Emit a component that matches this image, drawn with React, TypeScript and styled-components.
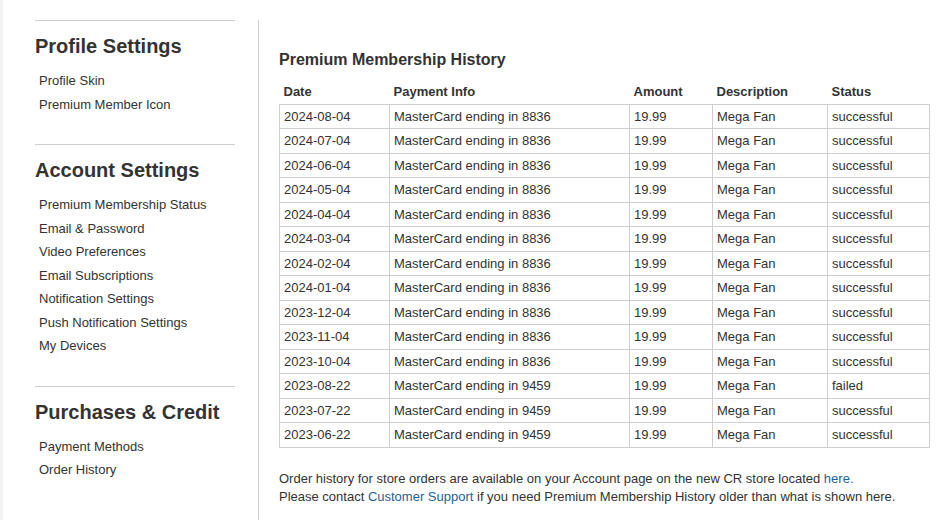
import styled, { createGlobalStyle } from "styled-components";

const GlobalStyle = createGlobalStyle`
  html, body {
    margin: 0;
    padding: 0;
    background: #f2f2f2;
  }
  body {
    font-family: "Liberation Sans", Arial, sans-serif;
    color: #333;
  }
`;

const Page = styled.div`
  display: flex;
  margin-left: 3px;
  min-height: 520px;
  background: #fff;
  padding-top: 20px;
  box-sizing: border-box;
`;

const Sidebar = styled.aside`
  width: 256px;
  flex-shrink: 0;
  box-sizing: border-box;
  padding-left: 32px;
  padding-right: 23px;
  border-right: 1px solid #d0d0d0;
`;

const Section = styled.section`
  border-top: 1px solid #cfcfcf;
  padding-bottom: 28px;
`;

const SectionTitle = styled.h2`
  margin: 13px 0 0;
  font-size: 20px;
  line-height: 24px;
  font-weight: 700;
  color: #333;
`;

const NavList = styled.ul`
  list-style: none;
  margin: 0;
  padding: 11px 0 0 4px;
`;

const NavItem = styled.li`
  font-size: 13px;
  line-height: 23.5px;
  color: #333;
  cursor: pointer;
`;

const Main = styled.main`
  flex: 1;
  padding: 0 16px 0 20px;
`;

const Title = styled.h1`
  margin: 30px 0 10px;
  font-size: 16px;
  line-height: 20px;
  font-weight: 700;
  color: #333;
`;

const Table = styled.table`
  width: 650px;
  table-layout: fixed;
  border-collapse: collapse;
  font-size: 13px;
  color: #333;
`;

const Th = styled.th<{ $w: number }>`
  box-sizing: border-box;
  width: ${(p) => p.$w}px;
  text-align: left;
  font-weight: 700;
  padding: 3px 4px 3px 4px;
  line-height: 17.5px;
`;

const Td = styled.td`
  border: 1px solid #cfcfcf;
  padding: 3px 4px 3px 4px;
  line-height: 17.5px;
  white-space: nowrap;
`;

const Note = styled.p`
  margin: 22px 0 0;
  font-size: 13px;
  line-height: 18px;
  color: #333;
`;

const Link = styled.a`
  color: #1f5f99;
  text-decoration: none;
`;

type Payment = {
  date: string;
  card: string;
  status: string;
};

const sections = [
  { title: "Profile Settings", items: ["Profile Skin", "Premium Member Icon"] },
  {
    title: "Account Settings",
    items: [
      "Premium Membership Status",
      "Email & Password",
      "Video Preferences",
      "Email Subscriptions",
      "Notification Settings",
      "Push Notification Settings",
      "My Devices",
    ],
  },
  { title: "Purchases & Credit", items: ["Payment Methods", "Order History"] },
];

const payments: Payment[] = [
  { date: "2024-08-04", card: "8836", status: "successful" },
  { date: "2024-07-04", card: "8836", status: "successful" },
  { date: "2024-06-04", card: "8836", status: "successful" },
  { date: "2024-05-04", card: "8836", status: "successful" },
  { date: "2024-04-04", card: "8836", status: "successful" },
  { date: "2024-03-04", card: "8836", status: "successful" },
  { date: "2024-02-04", card: "8836", status: "successful" },
  { date: "2024-01-04", card: "8836", status: "successful" },
  { date: "2023-12-04", card: "8836", status: "successful" },
  { date: "2023-11-04", card: "8836", status: "successful" },
  { date: "2023-10-04", card: "8836", status: "successful" },
  { date: "2023-08-22", card: "9459", status: "failed" },
  { date: "2023-07-22", card: "9459", status: "successful" },
  { date: "2023-06-22", card: "9459", status: "successful" },
];

export default function App() {
  return (
    <>
      <GlobalStyle />
      <Page>
        <Sidebar>
          {sections.map((s) => (
            <Section key={s.title}>
              <SectionTitle>{s.title}</SectionTitle>
              <NavList>
                {s.items.map((item) => (
                  <NavItem key={item}>{item}</NavItem>
                ))}
              </NavList>
            </Section>
          ))}
        </Sidebar>
        <Main>
          <Title>Premium Membership History</Title>
          <Table>
            <thead>
              <tr>
                <Th $w={110}>Date</Th>
                <Th $w={240}>Payment Info</Th>
                <Th $w={83}>Amount</Th>
                <Th $w={115}>Description</Th>
                <Th $w={102}>Status</Th>
              </tr>
            </thead>
            <tbody>
              {payments.map((p) => (
                <tr key={p.date}>
                  <Td>{p.date}</Td>
                  <Td>MasterCard ending in {p.card}</Td>
                  <Td>19.99</Td>
                  <Td>Mega Fan</Td>
                  <Td>{p.status}</Td>
                </tr>
              ))}
            </tbody>
          </Table>
          <Note>
            Order history for store orders are available on your Account page on
            the new CR store located <Link href="#">here.</Link>
            <br />
            Please contact <Link href="#">Customer Support</Link> if you need
            Premium Membership History older than what is shown here.
          </Note>
        </Main>
      </Page>
    </>
  );
}
